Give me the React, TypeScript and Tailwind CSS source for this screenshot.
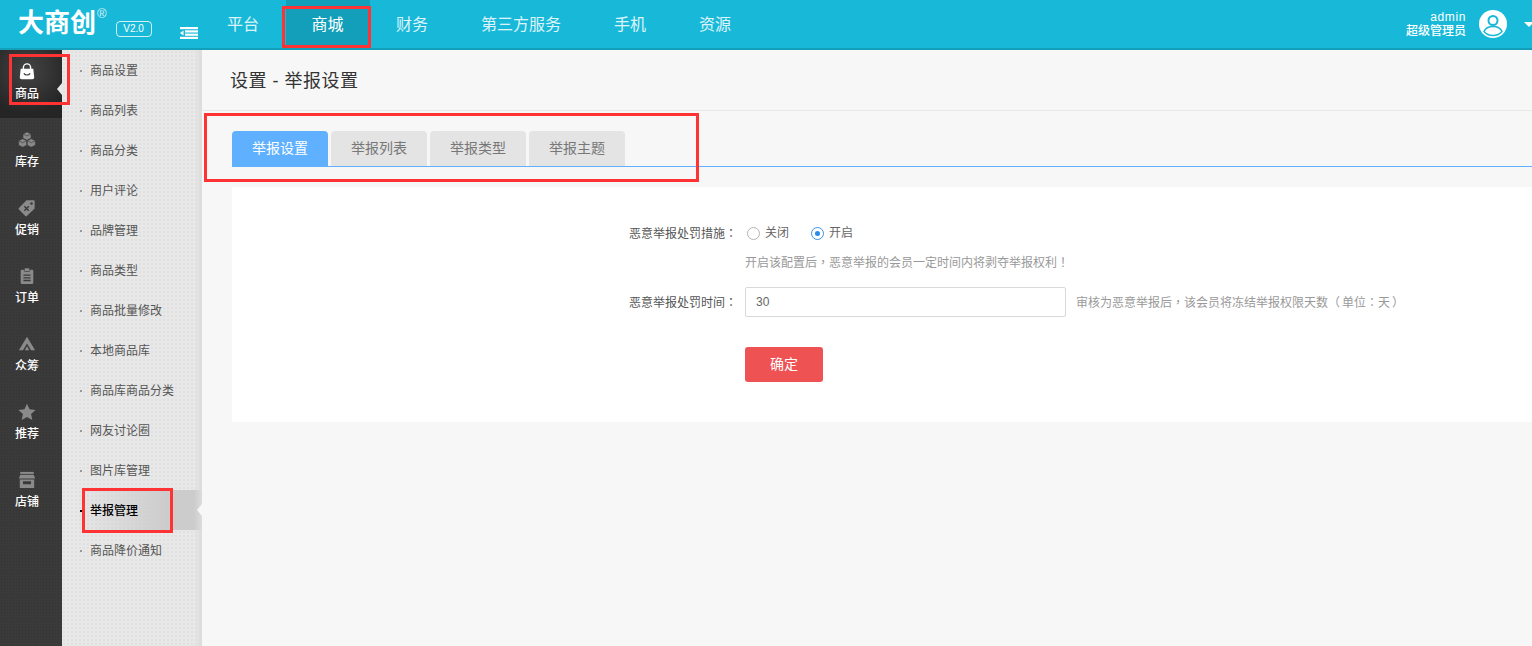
const cjk = "font-['Liberation_Sans','Noto_Sans_CJK_SC',sans-serif]";

const navItems = ["平台", "商城", "财务", "第三方服务", "手机", "资源"];

const subItems = [
  "商品设置",
  "商品列表",
  "商品分类",
  "用户评论",
  "品牌管理",
  "商品类型",
  "商品批量修改",
  "本地商品库",
  "商品库商品分类",
  "网友讨论圈",
  "图片库管理",
  "举报管理",
  "商品降价通知",
];

const tabs = ["举报设置", "举报列表", "举报类型", "举报主题"];

// 繁体字形的标点是居中的，和原图一致
const Punct = ({ children }: { children: string }) => (
  <span className="font-['Noto_Sans_CJK_TC',sans-serif]">{children}</span>
);

const BagIcon = () => (
  <svg width="18" height="18" viewBox="0 0 20 20">
    <path d="M6 7V5a4 4 0 0 1 8 0v2" fill="none" stroke="#fff" strokeWidth="1.6" />
    <path d="M3 6.500h14l1 9.500a2 2 0 0 1-2 2H4a2 2 0 0 1-2-2z" fill="#fff" />
    <path d="M6.500 11.500c1.500 2.500 5.500 2.500 7 0" fill="none" stroke="#3a3a3a" strokeWidth="1.3" />
  </svg>
);

const CubesIcon = () => (
  <svg width="18" height="18" viewBox="0 0 20 20" fill="#8a8a8a" stroke="#3a3a3a" strokeWidth="0.7">
    <path d="M10 1l4.500 2.200v4.800L10 10.300 5.500 8V3.200z" />
    <path d="M5.200 8.500l4.500 2.200v5L5.200 18 .7 15.700v-5z" />
    <path d="M14.800 8.500l4.500 2.200v5L14.800 18l-4.500-2.300v-5z" />
    <path d="M5.500 3.200L10 5.500l4.500-2.300M.7 10.700l4.500 2.300 4.500-2.300M10.300 10.700l4.500 2.300 4.500-2.300" fill="none" />
  </svg>
);

const TagIcon = () => (
  <svg width="18" height="18" viewBox="0 0 20 20">
    <path d="M9.500 1.500h8a1 1 0 0 1 1 1v8L9.800 19a1.200 1.200 0 0 1-1.700 0L1 11.800a1.200 1.200 0 0 1 0-1.700z" fill="#8a8a8a" />
    <circle cx="15" cy="5" r="1.400" fill="#3a3a3a" />
    <path d="M7 8l5 5M12 8l-5 5" stroke="#3a3a3a" strokeWidth="1.500" />
  </svg>
);

const ClipboardIcon = () => (
  <svg width="18" height="18" viewBox="0 0 20 20">
    <rect x="3" y="3" width="14" height="16" rx="1.500" fill="#8a8a8a" />
    <rect x="7" y="1" width="6" height="4" rx="1" fill="#8a8a8a" stroke="#3a3a3a" strokeWidth="0.800" />
    <path d="M6 9h8M6 12h8M6 15h8" stroke="#3a3a3a" strokeWidth="1.400" />
  </svg>
);

const PeakIcon = () => (
  <svg width="18" height="18" viewBox="0 0 20 20" fill="#8a8a8a">
    <path d="M10 2l9 15h-4.500L10 9.500 5.500 17H1z" />
    <path d="M10 12.500l2.500 4.500h-5z" />
  </svg>
);

const StarIcon = () => (
  <svg width="18" height="18" viewBox="0 0 20 20" fill="#8a8a8a">
    <path d="M10 .8l2.800 6.200 6.700.7-5 4.500 1.400 6.600L10 15.500l-5.900 3.300 1.400-6.600-5-4.500L7.200 7z" />
  </svg>
);

const ShopIcon = () => (
  <svg width="18" height="18" viewBox="0 0 20 20" fill="#8a8a8a">
    <rect x="2.500" y="1" width="15" height="2.200" />
    <path d="M2.500 4.200h15l1.500 4H1z" />
    <path d="M2 9.500h16V19H2zm3.500 1.800v2.500a1 1 0 0 0 1 1h7a1 1 0 0 0 1-1v-2.500z" fillRule="evenodd" />
  </svg>
);

const sideItems = [
  { label: "商品", icon: <BagIcon /> },
  { label: "库存", icon: <CubesIcon /> },
  { label: "促销", icon: <TagIcon /> },
  { label: "订单", icon: <ClipboardIcon /> },
  { label: "众筹", icon: <PeakIcon /> },
  { label: "推荐", icon: <StarIcon /> },
  { label: "店铺", icon: <ShopIcon /> },
];

function Header() {
  return (
    <header className="flex h-[50px] shrink-0 items-stretch border-b-2 border-[#139fba] bg-[#17b8d8] text-white">
      {/* logo */}
      <div className="flex w-[227px] shrink-0 items-start pl-[18px]">
        <span className="mt-[5px] text-[26px] font-bold leading-[36px]">大商创</span>
        <span className="ml-[1px] mt-[7px] text-[13px] leading-[14px] text-white/80">®</span>
        <span className="ml-[9px] mt-[21px] flex h-[16px] w-[36px] items-center justify-center rounded-[4px] border border-white/80 text-[10px] leading-none">
          V2.0
        </span>
        <svg className="ml-[28px] mt-[27px]" width="18" height="12" viewBox="0 0 18 12" fill="#fff">
          <rect x="0" y="0" width="18" height="2.200" />
          <path d="M0 6l3.500-2.500v5z" />
          <rect x="5" y="3.300" width="13" height="2.200" />
          <rect x="5" y="6.600" width="13" height="2.200" />
          <rect x="0" y="9.800" width="18" height="2.200" />
        </svg>
      </div>

      <nav className="-ml-[26.500px] flex">
        {navItems.map((item, i) => (
          <div
            key={item}
            className={
              i === 1
                ? "flex items-center bg-[#139fba] px-[26px] pt-[1px] text-[16px] text-white"
                : "flex items-center px-[26.500px] pt-[1px] text-[16px] text-white/85"
            }
          >
            {item}
          </div>
        ))}
      </nav>

      <div className="-mr-[2px] ml-auto flex items-center">
        <div className="text-right text-[12px] leading-[14px]">
          <div className="tracking-[0.6px]">admin</div>
          <div className="font-medium">超级管理员</div>
        </div>
        <svg className="ml-[13px]" width="28" height="28" viewBox="0 0 28 28">
          <circle cx="14" cy="14" r="14" fill="#fff" />
          <circle cx="14" cy="10.500" r="4.500" fill="none" stroke="#17b8d8" strokeWidth="2" />
          <path d="M5 21.500c2-4.500 5.500-5 9-5s7 .5 9 5c-2.500 3-5.500 4-9 4s-6.500-1-9-4z" fill="none" stroke="#17b8d8" strokeWidth="1.500" />
        </svg>
        <span className="ml-[17px] h-0 w-0 border-x-[5px] border-t-[5px] border-x-transparent border-t-white" />
      </div>
    </header>
  );
}

function IconRail() {
  return (
    <aside className="w-[62px] shrink-0 bg-[#3a3a3a] bg-[radial-gradient(#333_1px,transparent_1px)] bg-[size:3px_3px]">
      {sideItems.map((item, i) => (
        <div
          key={item.label}
          className={`relative flex h-[68px] flex-col items-center pr-[8px] pt-[13px] ${
            i === 0 ? "bg-[#2c2c2c] bg-[radial-gradient(circle_at_45%_30%,#444,#252525_75%)]" : ""
          }`}
        >
          {item.icon}
          <span className="mt-[5px] text-[12px] font-medium leading-[16px] text-white">{item.label}</span>
          {i === 0 && (
            <span className="absolute right-0 top-[33px] h-0 w-0 border-y-[6px] border-r-[5px] border-y-transparent border-r-[#e8e8e8]" />
          )}
        </div>
      ))}
    </aside>
  );
}

function SubMenu() {
  return (
    <aside className="relative w-[140px] shrink-0 bg-[#e8e8e8] bg-[radial-gradient(#e0e0e0_1px,transparent_1px)] bg-[size:4px_4px]">
      {subItems.map((item) => {
        const active = item === "举报管理";
        return (
          <div
            key={item}
            className={`relative flex h-[40px] items-center pl-[28px] pt-[2px] text-[12px] ${
              active ? "bg-gradient-to-r from-transparent from-10% to-[#cccccc] to-75% font-medium text-black" : "text-[#555]"
            }`}
          >
            <span className={`absolute left-[18px] top-[20px] h-[2px] w-[2px] ${active ? "bg-black" : "bg-[#999]"}`} />
            {item}
            {active && (
              <span className="absolute right-0 top-[14px] z-10 h-0 w-0 border-y-[6px] border-r-[5px] border-y-transparent border-r-[#f7f7f7]" />
            )}
          </div>
        );
      })}
      <div className="absolute inset-y-0 right-0 w-[8px] bg-gradient-to-r from-transparent to-[#dcdcdc]" />
    </aside>
  );
}

function Radio({ label, checked }: { label: string; checked?: boolean }) {
  return (
    <span className="flex items-center text-[12px] text-[#666]">
      <span
        className={`flex h-[13px] w-[13px] items-center justify-center rounded-full border bg-white ${
          checked ? "border-[#3b93e6]" : "border-[#b5b5b5]"
        }`}
      >
        {checked && <span className="h-[5px] w-[5px] rounded-full bg-[#2b8ae6]" />}
      </span>
      <span className="ml-[5px]">{label}</span>
    </span>
  );
}

function SettingsForm() {
  return (
    <div className="ml-[30px] mt-[20px] h-[235px] bg-white pt-[31px] text-[12px]">
      <div className="flex h-[30px] items-center">
        <div className="w-[505px] shrink-0 text-right text-[#555]">
          恶意举报处罚措施<Punct>：</Punct>
        </div>
        <div className="ml-[10px] flex items-center gap-[22px]">
          <Radio label="关闭" />
          <Radio label="开启" checked />
        </div>
      </div>
      <div className="ml-[513px] flex h-[30px] items-center pb-[2px] text-[#999]">
        <span>
          开启该配置后<Punct>，</Punct>恶意举报的会员一定时间内将剥夺举报权利<Punct>！</Punct>
        </span>
      </div>
      <div className="mt-[9px] flex h-[30px] items-center">
        <div className="w-[505px] shrink-0 text-right text-[#555]">
          恶意举报处罚时间<Punct>：</Punct>
        </div>
        <input
          readOnly
          value="30"
          className="ml-[8px] h-[30px] w-[321px] rounded-[2px] border border-[#d9d9d9] px-[10px] text-[12px] text-[#666] outline-none"
        />
        <span className="ml-[10px] text-[#999]">
          审核为恶意举报后<Punct>，</Punct>该会员将冻结举报权限天数<Punct>（</Punct>
          <span className="mx-[2px]">
            单位<Punct>：</Punct>天
          </span>
          <Punct>）</Punct>
        </span>
      </div>
      <button className="ml-[513px] mt-[30px] flex h-[35px] w-[78px] items-center justify-center rounded-[3px] bg-[#ee5253] text-[14px] text-white">
        确定
      </button>
    </div>
  );
}

export default function App() {
  return (
    <div className={`relative flex h-[646px] w-[1532px] flex-col overflow-hidden bg-[#f7f7f7] ${cjk}`}>
      <Header />
      <div className="flex min-h-0 flex-1">
        <IconRail />
        <SubMenu />
        <main className="min-w-0 flex-1">
          <div className="flex h-[61px] items-center border-b border-[#e8e8e8] pl-[28px] pt-[2px] text-[18px] tracking-[0.5px] text-[#333]">
            设置 - 举报设置
          </div>
          <div className="ml-[30px] mt-[20px] flex h-[36px] gap-[3px] border-b border-[#5fb1ff]">
            {tabs.map((tab, i) => (
              <div
                key={tab}
                className={`flex h-[35px] w-[96px] items-center justify-center rounded-t-[4px] text-[14px] ${
                  i === 0 ? "bg-[#5fb1ff] text-white" : "bg-[#e4e4e4] text-[#777]"
                }`}
              >
                {tab}
              </div>
            ))}
          </div>
          <SettingsForm />
        </main>
      </div>

      {/* red annotation boxes drawn over the screenshot */}
      <div className="absolute left-[282px] top-[6px] h-[42px] w-[89px] border-[3px] border-[#f33]" />
      <div className="absolute left-[9px] top-[54px] h-[51px] w-[61px] border-[3px] border-[#f33]" />
      <div className="absolute left-[204px] top-[113px] h-[69px] w-[495px] border-[3px] border-[#f33]" />
      <div className="absolute left-[82px] top-[488px] h-[45px] w-[91px] border-[3px] border-[#f33]" />
    </div>
  );
}
